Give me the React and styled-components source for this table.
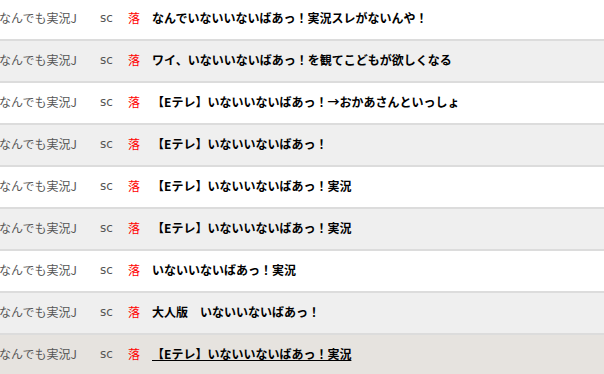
import React from "react";
import styled, { createGlobalStyle } from "styled-components";

const Global = createGlobalStyle`
  html, body { margin: 0; padding: 0; background: #fff; overflow: hidden; }
  body { font-family: "Noto Sans CJK JP", "Noto Sans", sans-serif; font-size: 12px; }
`;

const List = styled.div`
  margin-top: -1px;
  margin-left: -1px;
  width: 606px;
`;

const Row = styled.div`
  display: flex;
  align-items: center;
  box-sizing: border-box;
  height: 42px;
  padding-bottom: 3px;
  border-bottom: 2px solid #dcdcdc;
  background: ${(p) => (p.$hover ? "#e6e3df" : p.$alt ? "#efefef" : "#ffffff")};
`;

const Source = styled.span`
  width: 101px;
  color: #555;
  white-space: nowrap;
`;

const Sc = styled.span`
  width: 28px;
  color: #555;
  font-family: "DejaVu Sans", sans-serif;
  font-size: 12px;
`;

const Ochi = styled.span`
  width: 24px;
  color: #f00;
`;

const Title = styled.span`
  font-weight: 700;
  color: #000;
  white-space: nowrap;
  text-decoration: ${(p) => (p.$hover ? "underline" : "none")};
`;

const titles = [
  "なんでいないいないばあっ！実況スレがないんや！",
  "ワイ、いないいないばあっ！を観てこどもが欲しくなる",
  "【Eテレ】いないいないばあっ！→おかあさんといっしょ",
  "【Eテレ】いないいないばあっ！",
  "【Eテレ】いないいないばあっ！実況",
  "【Eテレ】いないいないばあっ！実況",
  "いないいないばあっ！実況",
  "大人版　いないいないばあっ！",
  "【Eテレ】いないいないばあっ！実況",
];

export default function App() {
  return (
    <>
      <Global />
      <List>
        {titles.map((t, i) => {
          const hover = i === titles.length - 1;
          return (
            <Row key={i} $alt={i % 2 === 1} $hover={hover}>
              <Source>なんでも実況J</Source>
              <Sc>sc</Sc>
              <Ochi>落</Ochi>
              <Title $hover={hover}>{t}</Title>
            </Row>
          );
        })}
      </List>
    </>
  );
}
